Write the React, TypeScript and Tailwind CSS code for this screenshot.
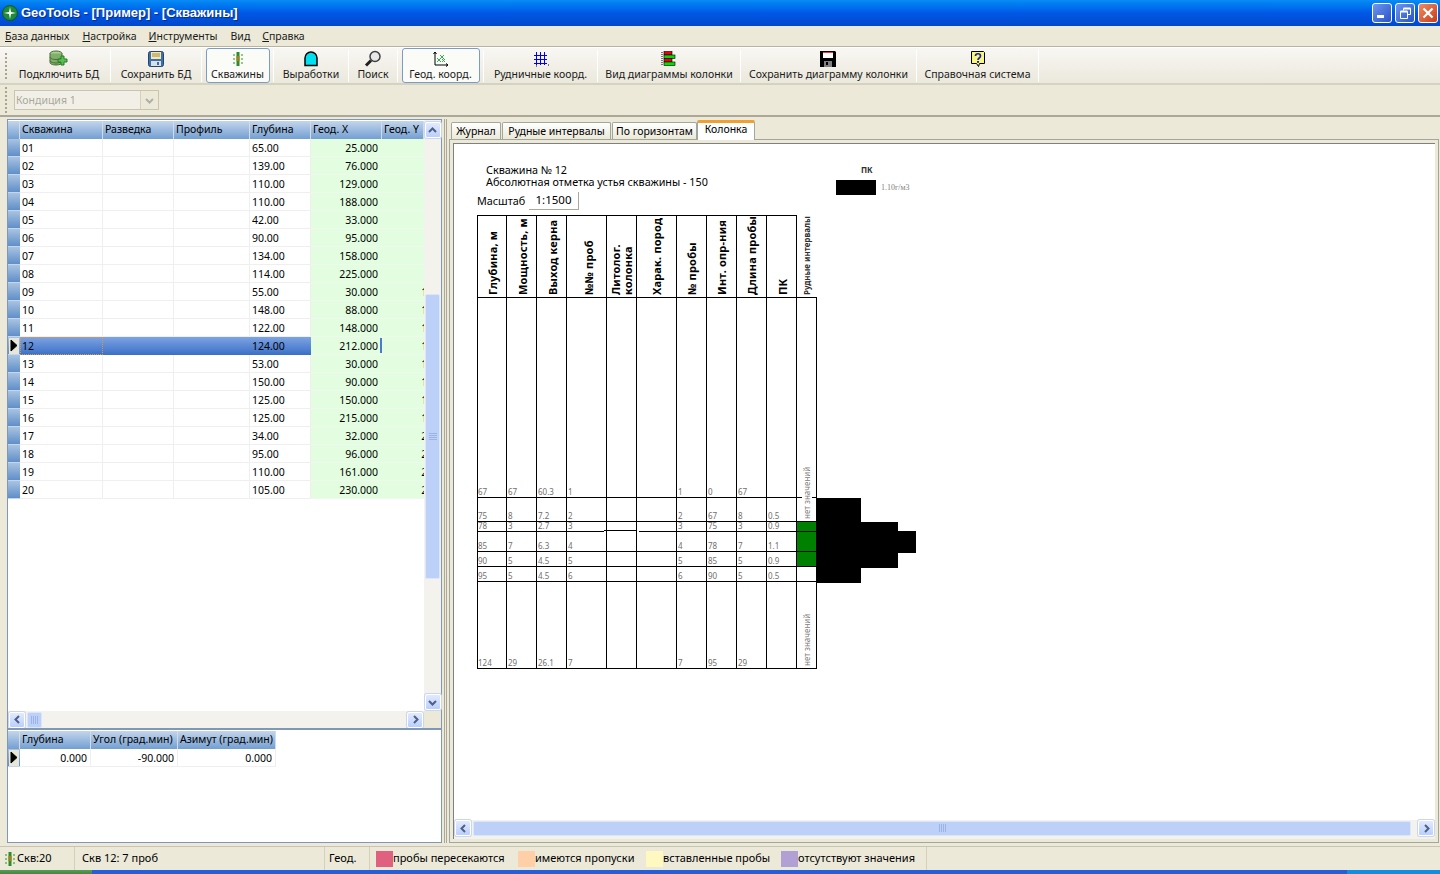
import React from "react";

const FONT = "font-['Noto_Sans','Liberation_Sans',sans-serif]";

function Sep() {
  return <div className="w-px h-[32px] bg-[#d6d2c0] border-r border-white shrink-0" />;
}

const DbIcon = () => (
  <svg width="20" height="18" viewBox="0 0 20 18">
    <ellipse cx="7" cy="3.500" rx="6" ry="2.500" fill="#a8d08d" stroke="#4a6a3a" />
    <path d="M1 3.500v9c0 1.400 2.700 2.500 6 2.500s6-1.100 6-2.500v-9" fill="#7fb069" stroke="#4a6a3a" />
    <path d="M1 7c0 1.400 2.700 2.500 6 2.500S13 8.400 13 7M1 10.500c0 1.400 2.700 2.500 6 2.500s6-1.100 6-2.500" fill="none" stroke="#4a6a3a" />
    <path d="M12 6h3v3h3v3h-3v3h-3v-3H9V9h3z" fill="#58c050" stroke="#2a7a2a" />
  </svg>
);
const SaveBlue = () => (
  <svg width="16" height="16" viewBox="0 0 16 16">
    <rect x=".5" y=".5" width="15" height="15" rx="2" fill="#3f6fa8" stroke="#23456f" />
    <rect x="3" y="1" width="10" height="7" fill="#f5e9b0" />
    <path d="M4 3h8M4 5h8" stroke="#a08a40" />
    <rect x="3" y="10" width="10" height="5" fill="#d8e0ea" />
    <rect x="9" y="11" width="2" height="3" fill="#3f6fa8" />
  </svg>
);
const WellIcon = () => (
  <svg width="16" height="16" viewBox="0 0 16 16">
    <rect x="6.500" y="1" width="3" height="14" fill="#2e8b2e" />
    <rect x="6.500" y="5" width="3" height="5" fill="#a08020" />
    <path d="M3 4h2M3 8h2M3 12h2M11 4h2M11 8h2M11 12h2" stroke="#1f9a1f" />
  </svg>
);
const Tunnel = () => (
  <svg width="16" height="16" viewBox="0 0 16 16">
    <path d="M2 14.500V7a6 6 0 0 1 12 0v7.500z" fill="#00e0f0" stroke="#000" strokeWidth="1.500" />
  </svg>
);
const Magnifier = () => (
  <svg width="18" height="18" viewBox="0 0 18 18">
    <circle cx="11" cy="6.500" r="5" fill="#e8e8e8" stroke="#404040" strokeWidth="1.500" />
    <path d="M7 10.500L2 15.500" stroke="#202020" strokeWidth="3" />
  </svg>
);
const GeoIcon = () => (
  <svg width="16" height="16" viewBox="0 0 16 16">
    <path d="M2 1v13h13" fill="none" stroke="#000" />
    <path d="M0.500 3L2 1l1.500 2M13 12.500l2 1.500-2 1.500" fill="none" stroke="#000" />
    <path d="M4 11l4-4M4 7l4 4M7 8l4-4M7 4l4 4M9 11l3-3M9 8l3 3" stroke="#30b050" />
  </svg>
);
const MineIcon = () => (
  <svg width="16" height="16" viewBox="0 0 16 16">
    <path d="M3.500 1v13M7.500 1v13M11.500 1v13M1 4.500h13M1 8.500h13M1 12.500h13" stroke="#0000e0" />
    <path d="M15 14h1M3 15h1" stroke="#000" />
  </svg>
);
const ColIcon = () => (
  <svg width="16" height="16" viewBox="0 0 16 16">
    <path d="M1 1v14" stroke="#000" strokeDasharray="1 1" />
    <rect x="3" y=".5" width="8" height="3.500" fill="#f00000" stroke="#000" strokeWidth=".6" />
    <rect x="3" y="4" width="11" height="3.500" fill="#00e000" stroke="#000" strokeWidth=".6" />
    <rect x="3" y="7.500" width="8" height="3.500" fill="#f00000" stroke="#000" strokeWidth=".6" />
    <rect x="3" y="11" width="11" height="3.500" fill="#00e000" stroke="#000" strokeWidth=".6" />
  </svg>
);
const SaveBlack = () => (
  <svg width="16" height="16" viewBox="0 0 16 16">
    <path d="M0 0h15l1 1v15H0z" fill="#000" />
    <rect x="3" y="1" width="10" height="6" fill="#fff" />
    <rect x="3" y="1" width="10" height="1" fill="#e04040" />
    <rect x="4" y="10" width="8" height="6" fill="#808080" />
    <rect x="6" y="11" width="2" height="3" fill="#000" />
  </svg>
);
const HelpIcon = () => (
  <svg width="16" height="17" viewBox="0 0 16 17">
    <path d="M1.500.5h12l1 1v11h-5l-1 3-2-3h-5z" fill="#f8f880" stroke="#000" />
    <path d="M5.500 5c0-3 5-3 5 0 0 2-2.500 2-2.500 4" fill="none" stroke="#2020a0" strokeWidth="1.700" />
    <rect x="7" y="10" width="2" height="1.800" fill="#2020a0" />
  </svg>
);

type Tool = { label: string; w: number; icon: React.ReactNode; active?: boolean };
const tools: Tool[] = [
  { label: "Подключить БД", w: 102, icon: <DbIcon /> },
  { label: "Сохранить БД", w: 90, icon: <SaveBlue /> },
  { label: "Скважины", w: 71, icon: <WellIcon />, active: true },
  { label: "Выработки", w: 74, icon: <Tunnel /> },
  { label: "Поиск", w: 48, icon: <Magnifier /> },
  { label: "Геод. коорд.", w: 85, icon: <GeoIcon />, active: true },
  { label: "Рудничные коорд.", w: 113, icon: <MineIcon /> },
  { label: "Вид диаграммы колонки", w: 142, icon: <ColIcon /> },
  { label: "Сохранить диаграмму колонки", w: 175, icon: <SaveBlack /> },
  { label: "Справочная система", w: 121, icon: <HelpIcon /> },
];

const Grip = () => (
  <div className="w-[3px] h-[26px] shrink-0 flex flex-col justify-between ml-[5px]">
    {[0, 1, 2, 3, 4, 5, 6].map((i) => (
      <div key={i} className="w-[2px] h-[2px] bg-[#a8a490]" />
    ))}
  </div>
);

function Arrow({ dir }: { dir: "up" | "down" | "left" | "right" }) {
  const d = {
    up: "M2 7l3.500-3.500L9 7",
    down: "M2 4l3.500 3.500L9 4",
    left: "M7 2L3.500 5.500 7 9",
    right: "M4 2l3.500 3.500L4 9",
  }[dir];
  return (
    <svg width="11" height="11" viewBox="0 0 11 11">
      <path d={d} fill="none" stroke="#4d6185" strokeWidth="2" />
    </svg>
  );
}

function SBtn({ dir }: { dir: "up" | "down" | "left" | "right" }) {
  return (
    <div className="w-[16px] h-[16px] shrink-0 rounded-[2px] border border-white bg-gradient-to-b from-[#e1eafe] to-[#bccffb] flex items-center justify-center shadow-[0_0_0_1px_#c8d6f0]">
      <Arrow dir={dir} />
    </div>
  );
}

function VThumb() {
  return (
    <div className="h-[285px] w-[15px] mx-[1px] rounded-[2px] border border-[#dbe5fb] bg-[#bcd0f8] flex items-center justify-center">
      <div className="flex flex-col gap-px">
        {[0, 1, 2, 3].map((i) => (
          <div key={i} className="w-[8px] h-px bg-[#9db3e4]" />
        ))}
      </div>
    </div>
  );
}

const wells: [string, string, string, string][] = [
  ["01", "65.00", "25.000", "50.000"],
  ["02", "139.00", "76.000", "50.000"],
  ["03", "110.00", "129.000", "50.000"],
  ["04", "110.00", "188.000", "50.000"],
  ["05", "42.00", "33.000", "90.000"],
  ["06", "90.00", "95.000", "90.000"],
  ["07", "134.00", "158.000", "90.000"],
  ["08", "114.00", "225.000", "90.000"],
  ["09", "55.00", "30.000", "130.000"],
  ["10", "148.00", "88.000", "130.000"],
  ["11", "122.00", "148.000", "130.000"],
  ["12", "124.00", "212.000", "130.000"],
  ["13", "53.00", "30.000", "170.000"],
  ["14", "150.00", "90.000", "170.000"],
  ["15", "125.00", "150.000", "170.000"],
  ["16", "125.00", "215.000", "170.000"],
  ["17", "34.00", "32.000", "210.000"],
  ["18", "95.00", "96.000", "210.000"],
  ["19", "110.00", "161.000", "210.000"],
  ["20", "105.00", "230.000", "210.000"],
];

const hdrCell =
  "h-full shrink-0 border-r border-[#d0dcec] pl-[2px] flex items-center overflow-hidden whitespace-nowrap";

function IndicatorArrow({ filled }: { filled?: boolean }) {
  return (
    <div className="w-[12px] h-[18px] shrink-0 bg-gradient-to-b from-[#a8c3e2] to-[#5f8fc8] border-b border-[#c5d6ea] flex items-center justify-center">
      {filled && (
        <div className="w-[10px] h-[16px] bg-[#e8e6d8] flex items-center justify-center">
          <svg width="9" height="13" viewBox="0 0 9 13">
            <path d="M1 1l6 5.500L1 12z" fill="#000" stroke="#000" />
          </svg>
        </div>
      )}
    </div>
  );
}

function WellRow({ row, selected }: { row: [string, string, string, string]; selected: boolean }) {
  const c = selected
    ? "bg-gradient-to-b from-[#7ea3e2] to-[#3a6fc6]"
    : "bg-white border-b border-[#efefef]";
  const sep = selected ? "" : "border-r border-[#efefef]";
  return (
    <div className="flex h-[18px]">
      <IndicatorArrow filled={selected} />
      <div className={`w-[83px] shrink-0 pl-[2px] leading-[18px] ${sep} ${c} ${selected ? "outline-1 outline-dotted outline-[#d89a40] -outline-offset-1" : ""}`}>
        {row[0]}
      </div>
      <div className={`w-[71px] shrink-0 ${sep} ${c}`} />
      <div className={`w-[76px] shrink-0 ${sep} ${c}`} />
      <div className={`w-[61px] shrink-0 pl-[2px] leading-[18px] ${sep} ${c}`}>{row[1]}</div>
      <div className="w-[71px] shrink-0 pr-[4px] text-right leading-[18px] bg-[#e3fde0] border-b border-[#f0f8ee] relative">
        {row[2]}
        {selected && <div className="absolute right-0 top-px bottom-px w-[2px] bg-[#4a7ccc]" />}
      </div>
      <div className="w-[42px] shrink-0 overflow-hidden bg-[#e3fde0] border-b border-[#f0f8ee] leading-[18px]">
        <div className="w-[81px] pr-[3px] text-right">{row[3]}</div>
      </div>
    </div>
  );
}

const cols = [477, 506.5, 536.5, 566.5, 606.5, 636.5, 676.5, 706.5, 736.5, 766.5, 796.5, 816.5];
const hLines = [215, 297.5, 497.5, 521.5, 551.5, 566.5, 581.5, 668.5];
const valX = [478, 508, 538, 568, 678, 708, 738, 768];
const vals: [number, string[]][] = [
  [495, ["67", "67", "60.3", "1", "1", "0", "67", ""]],
  [519, ["75", "8", "7.2", "2", "2", "67", "8", "0.5"]],
  [529, ["78", "3", "2.7", "3", "3", "75", "3", "0.9"]],
  [549, ["85", "7", "6.3", "4", "4", "78", "7", "1.1"]],
  [564, ["90", "5", "4.5", "5", "5", "85", "5", "0.9"]],
  [579, ["95", "5", "4.5", "6", "6", "90", "5", "0.5"]],
  [666, ["124", "29", "26.1", "7", "7", "95", "29", ""]],
];
const heads: [number, string][] = [
  [497, "Глубина, м"],
  [527, "Мощность, м"],
  [557, "Выход керна"],
  [593, "№№ проб"],
  [620, "Литолог."],
  [632, "колонка"],
  [661, "Харак. пород"],
  [696, "№ пробы"],
  [726, "Инт. опр-ния"],
  [756, "Длина пробы"],
  [787, "ПК"],
];

function LogChart() {
  const fam = "'Noto Sans','Liberation Sans',sans-serif";
  return (
    <svg width="460" height="470" viewBox="470 210 460 470" className="block" shapeRendering="crispEdges">
      <rect x="797" y="521" width="20" height="46" fill="#008000" />
      <path d="M817 498h44v24h37v9h18v22h-18v15h-37v15h-44z" fill="#000" />
      {cols.map((x, i) => (
        <line key={x} x1={x} x2={x} y1={i === 11 ? 297 : 215} y2={669} stroke="#000" />
      ))}
      <line x1={477} x2={797} y1={215.5} y2={215.5} stroke="#000" />
      {hLines.slice(1).map((y) => (
        <line key={y} x1={477} x2={817} y1={y} y2={y} stroke="#000" />
      ))}
      <line x1={477} x2={817} y1={531.5} y2={531.5} stroke="#000" />
      <rect x="604" y="530" width="35" height="3" fill="#fff" />
      <line x1={604} x2={637} y1={530.5} y2={530.5} stroke="#000" />
      <line x1={606.5} x2={606.5} y1={522} y2={552} stroke="#000" />
      <line x1={636.5} x2={636.5} y1={522} y2={552} stroke="#000" />
      <rect x="802" y="496" width="10" height="3" fill="#fff" />
      <g shapeRendering="auto" fontFamily={fam}>
        {vals.map(([y, row]) =>
          row.map((t, i) =>
            t ? (
              <text key={`${y}-${i}`} x={valX[i]} y={y} fontSize="8" fill="#707070">
                {t}
              </text>
            ) : null,
          ),
        )}
        {heads.map(([x, t]) => (
          <text key={t} transform={`translate(${x} 295) rotate(-90)`} fontSize="11" fontWeight="700" fill="#000" letterSpacing=".2">
            {t}
          </text>
        ))}
        <text transform="translate(810 295) rotate(-90)" fontSize="8" fontWeight="700" fill="#303030">
          Рудные интервалы
        </text>
        <text transform="translate(810 519) rotate(-90)" fontSize="8" fill="#808080">
          нет значений
        </text>
        <text transform="translate(810 666) rotate(-90)" fontSize="8" fill="#808080">
          нет значений
        </text>
      </g>
    </svg>
  );
}

const legend: [string, string, string][] = [
  ["w-[128px]", "bg-[#ffcfa8]", "имеются пропуски"],
  ["w-[135px]", "bg-[#fff8c0]", "вставленные пробы"],
  ["w-[146px] border-r border-[#d4d0bc]", "bg-[#b0a0d4]", "отсутствуют значения"],
];

export default function App() {
  return (
    <div className={`w-[1440px] h-[874px] overflow-hidden flex flex-col bg-[#ece9d8] text-[10.5px] text-black ${FONT}`}>
      {/* Title bar */}
      <div className="h-[26px] shrink-0 flex items-center pl-[2px] pr-[2px] bg-gradient-to-b from-[#0a8cf5] via-[#0058e6] to-[#0048cc]">
        <svg width="16" height="16" viewBox="0 0 16 16" className="shrink-0">
          <circle cx="8" cy="8" r="7.500" fill="#1f8a3a" stroke="#0d5a20" />
          <path d="M8 2l1 5 5 1-5 1-1 5-1-5-5-1 5-1z" fill="#fff" />
        </svg>
        <div className="ml-[3px] text-white text-[13px] font-bold font-['Liberation_Sans',sans-serif] [text-shadow:1px_1px_1px_#0a2a80] whitespace-nowrap">
          GeoTools - [Пример] - [Скважины]
        </div>
        <div className="flex-1" />
        <div className="flex gap-[3px]">
          <div className="w-[20px] h-[20px] rounded-[3px] border border-white bg-gradient-to-br from-[#6f96ee] to-[#2a52c8] flex items-end pl-[4px] pb-[4px]">
            <div className="w-[7px] h-[3px] bg-white" />
          </div>
          <div className="w-[20px] h-[20px] rounded-[3px] border border-white bg-gradient-to-br from-[#6f96ee] to-[#2a52c8] flex items-center justify-center">
            <svg width="13" height="13" viewBox="0 0 13 13">
              <path d="M4.500 3.500V1.500h7v6H9M1.500 4.500h7v7h-7z" fill="none" stroke="#fff" />
              <path d="M4.500 1.500h7M1.500 4.500h7" stroke="#fff" strokeWidth="2" />
            </svg>
          </div>
          <div className="w-[20px] h-[20px] rounded-[3px] border border-white bg-gradient-to-br from-[#ee8a64] to-[#c83a12] flex items-center justify-center">
            <svg width="12" height="12" viewBox="0 0 12 12">
              <path d="M1.500 1.500l9 9M10.500 1.500l-9 9" stroke="#fff" strokeWidth="2.200" />
            </svg>
          </div>
        </div>
      </div>

      {/* Menu */}
      <div className="h-[20px] shrink-0 flex items-center pt-[1px] text-[#1a1a1a]">
        <span className="ml-[5px]"><u>Б</u>аза данных</span>
        <span className="ml-[13px]"><u>Н</u>астройка</span>
        <span className="ml-[12px]"><u>И</u>нструменты</span>
        <span className="ml-[13px]">Вид</span>
        <span className="ml-[12px]"><u>С</u>правка</span>
      </div>

      {/* Toolbar 1 */}
      <div className="h-[39px] shrink-0 border-t border-[#b8b4a0]">
        <div className="h-full flex items-center bg-gradient-to-b from-[#f8f7f3] to-[#ebe8dc] border-t border-white border-b-2 border-b-[#d6d2c0]">
          <Grip />
          {tools.map((t) => (
            <React.Fragment key={t.label}>
              <div className="shrink-0 h-full flex items-center justify-center" style={{ width: t.w }}>
                <div
                  className={
                    t.active
                      ? "flex flex-col items-center h-[35px] w-[calc(100%-7px)] pt-[1px] rounded-[3px] border border-[#7a9cc6] bg-[#fbfbf8]"
                      : "flex flex-col items-center h-[35px] pt-[2px]"
                  }
                >
                  <div className="h-[18px] shrink-0 flex items-center">{t.icon}</div>
                  <div className="h-[13px] shrink-0 leading-[13px] whitespace-nowrap text-[#1a1a1a]">{t.label}</div>
                </div>
              </div>
              <Sep />
            </React.Fragment>
          ))}
        </div>
      </div>

      {/* Toolbar 2 */}
      <div className="h-[32px] shrink-0 flex items-center border-b-2 border-[#aca899]">
        <Grip />
        <div className="h-[20px] w-[145px] ml-[6px] border border-[#c8c4b0] flex bg-[#ece9d8]">
          <div className="w-[125px] h-full bg-[#f2f0e6] pl-[1px] leading-[18px] text-[#a8a8a0]">Кондиция 1</div>
          <div className="flex-1 flex items-center justify-center border-l border-[#d4d0bc]">
            <svg width="11" height="11" viewBox="0 0 11 11">
              <path d="M2 4l3.500 3.500L9 4" fill="none" stroke="#b0b0a8" strokeWidth="2" />
            </svg>
          </div>
        </div>
      </div>

      {/* Main */}
      <div className="h-[729px] shrink-0 flex pt-[2px] pb-[3px] pl-[7px]">
        {/* Left */}
        <div className="w-[435px] h-full shrink-0 border border-[#7f98b8] flex flex-col bg-white">
          <div className="h-[608px] shrink-0 flex flex-col">
            <div className="flex h-[591px]">
              <div className="w-[416px] overflow-hidden pt-px">
                <div className="flex h-[18px] bg-gradient-to-b from-[#c3d5ea] to-[#739fd2]">
                  <div className="w-[12px] h-full border-r border-[#d0dcec] shrink-0" />
                  <div className={`w-[83px] ${hdrCell}`}>Скважина</div>
                  <div className={`w-[71px] ${hdrCell}`}>Разведка</div>
                  <div className={`w-[76px] ${hdrCell}`}>Профиль</div>
                  <div className={`w-[61px] ${hdrCell}`}>Глубина</div>
                  <div className={`w-[71px] ${hdrCell}`}>Геод. X</div>
                  <div className={`w-[42px] ${hdrCell}`}>Геод. Y</div>
                </div>
                {wells.map((r) => (
                  <WellRow key={r[0]} row={r} selected={r[0] === "12"} />
                ))}
              </div>
              <div className="w-[17px] shrink-0 bg-[#f4f2ec] flex flex-col pt-[2px] items-center pb-px">
                <SBtn dir="up" />
                <div className="h-[156px] shrink-0" />
                <VThumb />
                <div className="flex-1" />
                <SBtn dir="down" />
              </div>
            </div>
            <div className="h-[17px] flex shrink-0">
              <div className="w-[416px] bg-[#f4f2ec] flex items-center pl-[1px] pr-[1px]">
                <SBtn dir="left" />
                <div className="ml-[2px] w-[15px] h-[16px] rounded-[2px] border border-[#dbe5fb] bg-[#bcd0f8] flex items-center justify-center gap-px">
                  {[0, 1, 2, 3].map((i) => (
                    <div key={i} className="w-px h-[8px] bg-[#9db3e4]" />
                  ))}
                </div>
                <div className="flex-1" />
                <SBtn dir="right" />
              </div>
              <div className="flex-1 bg-[#ece9d8]" />
            </div>
          </div>
          <div className="h-[3px] shrink-0 border-t-2 border-[#7f98b8]" />
          <div className="flex-1">
            <div className="flex h-[18px] bg-gradient-to-b from-[#c3d5ea] to-[#739fd2] w-[268px]">
              <div className="w-[12px] h-full border-r border-[#d0dcec] shrink-0" />
              <div className={`w-[71px] ${hdrCell}`}>Глубина</div>
              <div className={`w-[87px] ${hdrCell}`}>Угол (град.мин)</div>
              <div className={`w-[98px] ${hdrCell}`}>Азимут (град.мин)</div>
            </div>
            <div className="flex h-[18px] w-[268px] leading-[18px]">
              <IndicatorArrow filled />
              <div className="w-[71px] shrink-0 pr-[3px] text-right border-r border-b border-[#efefef]">0.000</div>
              <div className="w-[87px] shrink-0 pr-[3px] text-right border-r border-b border-[#efefef]">-90.000</div>
              <div className="w-[98px] shrink-0 pr-[3px] text-right border-r border-b border-[#efefef]">0.000</div>
            </div>
          </div>
        </div>

        {/* Splitter */}
        <div className="w-[7px] h-full shrink-0 flex justify-center">
          <div className="w-[3px] h-full border-x border-[#aca899]" />
        </div>

        {/* Right */}
        <div className="flex-1 min-w-0 flex flex-col">
          <div className="h-[20px] shrink-0 flex items-end pl-[2px]">
            {[
              ["Журнал", "w-[50px]"],
              ["Рудные интервалы", "w-[109px]"],
              ["По горизонтам", "w-[85px]"],
            ].map(([t, w]) => (
              <div key={t} className={`${w} h-[17px] mr-px shrink-0 rounded-t-[2px] border border-b-0 border-[#a0a89c] bg-gradient-to-b from-white to-[#ece9d8] text-center leading-[17px] whitespace-nowrap`}>
                {t}
              </div>
            ))}
            <div className="w-[58px] h-[20px] -ml-px shrink-0 rounded-t-[2px] border-t-[3px] border-x border-x-[#a0a89c] border-t-[#f0a030] bg-white text-center leading-[13px] relative z-10 mb-[-1px]">
              Колонка
            </div>
          </div>
          <div className="flex-1 border border-[#a0a89c] p-[3px] mr-[1px] min-h-0">
            <div className="h-full border-t border-l border-[#808080] bg-white flex flex-col">
              <div className="flex-1 min-h-0 overflow-hidden pt-[20px]">
                <div className="flex h-[24px]">
                  <div className="ml-[32px] w-[350px] shrink-0 leading-[12px] text-[10.8px]">
                    <div>Скважина № 12</div>
                    <div>Абсолютная отметка устья скважины - 150</div>
                  </div>
                  <div className="w-[40px] shrink-0 relative">
                    <div className="text-[8px] font-bold leading-[12px] pl-[25px] text-[#303030]">ПК</div>
                    <div className="w-[40px] h-[15px] bg-black mt-[4px]" />
                    <div className="absolute left-[45px] top-[16px] text-[8px] leading-[15px] text-[#808080] whitespace-nowrap font-['Liberation_Serif',serif]">1.10г/м3</div>
                  </div>
                </div>
                <div className="flex items-center h-[18px] mt-[4px] ml-[23px]">
                  <span className="w-[52px] text-[10.8px]">Масштаб</span>
                  <div className="w-[50px] h-[18px] border-r border-b border-[#aca899] text-[11.5px] leading-[16px] text-center">1:1500</div>
                </div>
                <div className="ml-[16px]">
                  <LogChart />
                </div>
              </div>
              <div className="h-[19px] shrink-0 bg-[#f4f2ec] flex items-center px-[1px] pb-[3px]">
                <SBtn dir="left" />
                <div className="ml-[2px] flex-1 h-[15px] rounded-[2px] border border-[#dbe5fb] bg-[#bcd0f8] flex items-center justify-center gap-px">
                  {[0, 1, 2, 3].map((i) => (
                    <div key={i} className="w-px h-[8px] bg-[#9db3e4]" />
                  ))}
                </div>
                <div className="w-[7px] shrink-0" />
                <SBtn dir="right" />
              </div>
            </div>
          </div>
        </div>
      </div>

      {/* Status */}
      <div className="h-[24px] shrink-0 flex items-center border-t border-[#c8c4b0] text-[11px]">
        <div className="w-[75px] h-full shrink-0 flex items-center pl-[2px] border-r border-[#d4d0bc]">
          <WellIcon />
          <span className="ml-[-1px]">Скв:20</span>
        </div>
        <div className="w-[250px] h-full shrink-0 flex items-center pl-[7px] border-r border-[#d4d0bc]">Скв 12: 7 проб</div>
        <div className="w-[45px] h-full shrink-0 flex items-center pl-[4px] border-r border-[#d4d0bc]">Геод.</div>
        <div className="h-full flex items-center pl-[6px] w-[148px] shrink-0">
          <div className="w-[17px] h-[16px] bg-[#e06080] shrink-0" />
          <span className="whitespace-nowrap">пробы пересекаются</span>
        </div>
        {legend.map(([w, bg, t]) => (
          <div key={t} className={`h-full flex items-center shrink-0 ${w}`}>
            <div className={`w-[17px] h-[16px] ${bg} shrink-0`} />
            <span className="whitespace-nowrap">{t}</span>
          </div>
        ))}
      </div>

      {/* Taskbar strip */}
      <div className="h-[4px] shrink-0 flex">
        <div className="w-[92px] bg-gradient-to-b from-[#5a9a5a] to-[#3c8a3c]" />
        <div className="flex-1 bg-[#245edb]" />
        <div className="w-[93px] bg-[#0f8ee5]" />
      </div>
    </div>
  );
}
